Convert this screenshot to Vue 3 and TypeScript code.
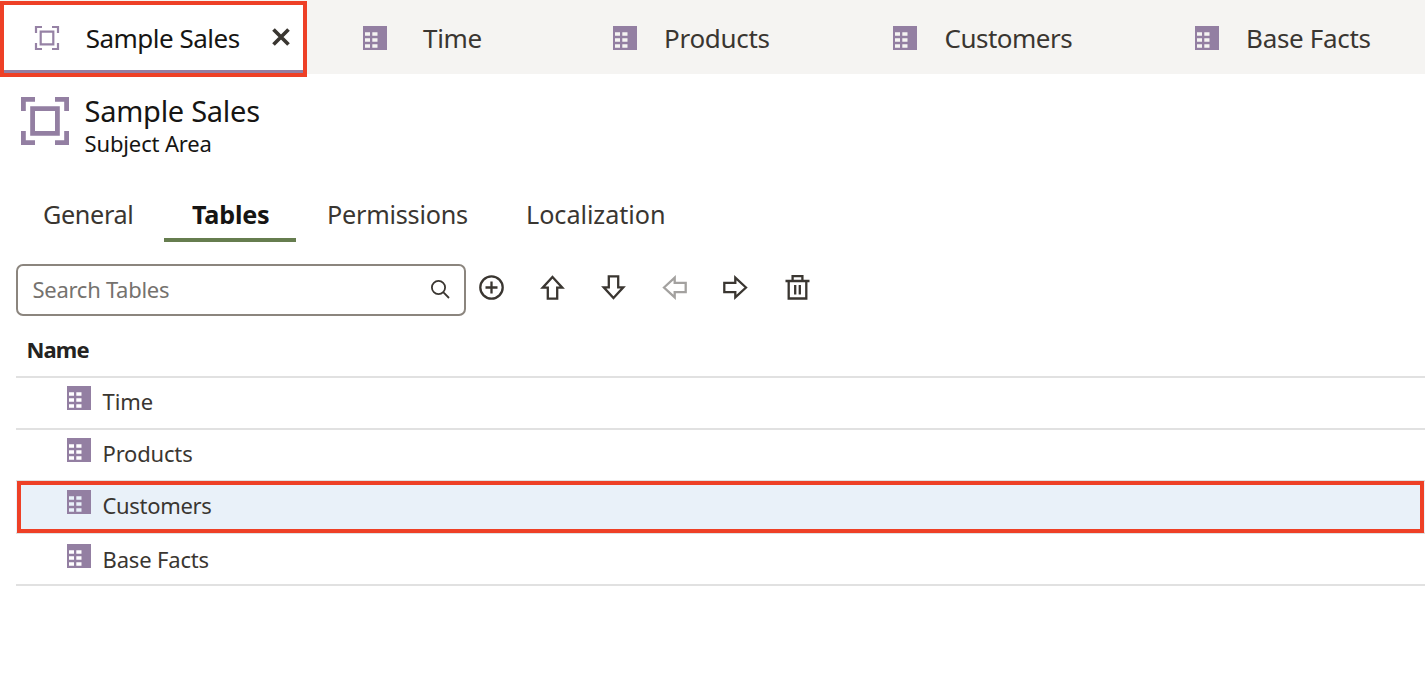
<script setup lang="ts">
interface Label {
  text: string
  spacing: number
}
interface OpenTab extends Label {
  width: number
  gap: number
}
interface Action {
  name: string
  path: string
  disabled?: boolean
}

const openTabs: OpenTab[] = [
  { text: 'Time', spacing: -0.35, width: 250, gap: 36.5 },
  { text: 'Products', spacing: -0.3, width: 280, gap: 27.5 },
  { text: 'Customers', spacing: -0.52, width: 302, gap: 28 },
  { text: 'Base Facts', spacing: -0.32, width: 231, gap: 27.5 },
]

const sections: (Label & { width: number; active?: boolean })[] = [
  { text: 'General', spacing: -0.35, width: 148 },
  { text: 'Tables', spacing: -0.2, width: 132, active: true },
  { text: 'Permissions', spacing: -0.23, width: 203 },
  { text: 'Localization', spacing: -0.05, width: 194 },
]

const actions: Action[] = [
  { name: 'Add', path: 'M12.5 1.3a11.2 11.2 0 1 0 0 22.4a11.2 11.2 0 1 0 0-22.4zM12.5 6.5v12M6.5 12.5h12' },
  { name: 'Move up', path: 'M12.5 2L22.3 12.7H17.2V23.7H7.8V12.7H2.7Z' },
  { name: 'Move down', path: 'M12.5 23L22.3 12.3H17.2V1.3H7.8V12.3H2.7Z' },
  { name: 'Move left', path: 'M2 12.5L12.7 2.7V7.8H23.7V17.2H12.7V22.3Z', disabled: true },
  { name: 'Move right', path: 'M23 12.5L12.3 2.7V7.8H1.3V17.2H12.3V22.3Z' },
  { name: 'Delete', path: 'M.5 6H24.5M3.7 6V23.5H21.3V6M7.6 6V1.2H17.4V6M10.2 10v9.5M14.8 10v9.5' },
]

const tables: (Label & { selected?: boolean })[] = [
  { text: 'Time', spacing: -0.1 },
  { text: 'Products', spacing: -0.18 },
  { text: 'Customers', spacing: -0.33, selected: true },
  { text: 'Base Facts', spacing: -0.17 },
]

const tableIcon =
  'M0 0H24V24H0ZM2 6.2V9.7H7V6.2ZM9.3 6.2V9.7H14.5V6.2ZM2 12.2V15.7H7V12.2ZM9.3 12.2V15.7H14.5V12.2ZM2 18.2V21.7H7V18.2ZM9.3 18.2V21.7H14.5V18.2Z'
</script>

<template>
  <div class="page">
    <header class="strip">
      <div class="current">
        <svg class="area-small" viewBox="0 0 24 24">
          <path d="M1 7V1H7M17 1H23V7M23 17V23H17M7 23H1V17M5.7 5.7H18.3V18.3H5.7Z" />
        </svg>
        <span class="current-name">Sample Sales</span>
        <svg class="close" viewBox="0 0 18 18"><path d="M1.5 1.5L16.5 16.5M16.5 1.5L1.5 16.5" /></svg>
      </div>
      <div v-for="t in openTabs" :key="t.text" class="open-tab" :style="{ width: t.width + 'px', gap: t.gap + 'px' }">
        <svg class="table-icon" viewBox="0 0 24 24"><path :d="tableIcon" fill-rule="evenodd" /></svg>
        <span :style="{ letterSpacing: t.spacing + 'px' }">{{ t.text }}</span>
      </div>
    </header>

    <section class="heading">
      <svg class="area-large" viewBox="0 0 48 48">
        <path d="M2.4 14V2.4H14M34 2.4H45.6V14M45.6 34V45.6H34M14 45.6H2.4V34M11.6 11.6H36.4V36.4H11.6Z" />
      </svg>
      <div>
        <h1>Sample Sales</h1>
        <p>Subject Area</p>
      </div>
    </section>

    <nav class="sections">
      <div v-for="s in sections" :key="s.text" class="section" :class="{ active: s.active }" :style="{ width: s.width + 'px' }">
        <span :style="{ letterSpacing: s.spacing + 'px' }">{{ s.text }}</span>
      </div>
    </nav>

    <div class="toolbar">
      <div class="search">
        <span>Search Tables</span>
        <svg viewBox="0 0 19 19"><circle cx="7.5" cy="7.5" r="6.6" /><path d="M12.2 12.2L18 18" /></svg>
      </div>
      <svg v-for="a in actions" :key="a.name" class="action" :class="{ disabled: a.disabled }" viewBox="0 0 25 25">
        <title>{{ a.name }}</title>
        <path :d="a.path" />
      </svg>
    </div>

    <div class="list">
      <div class="list-head">Name</div>
      <div v-for="t in tables" :key="t.text" class="row" :class="{ selected: t.selected }">
        <svg class="table-icon" viewBox="0 0 24 24"><path :d="tableIcon" fill-rule="evenodd" /></svg>
        <span :style="{ letterSpacing: t.spacing + 'px' }">{{ t.text }}</span>
      </div>
    </div>
  </div>
</template>

<style>
body { background: #fff; overflow: hidden; }
</style>

<style scoped>
.page { box-sizing: border-box; width: 1425px; height: 678px; overflow: hidden; font-family: "Noto Sans", "Open Sans", sans-serif; color: #3a3631; }
.page *, .page *::before { box-sizing: border-box; }
svg { display: block; flex: none; overflow: visible; }
.strip { display: flex; height: 74px; background: #f5f4f2; font-size: 26px; line-height: 76px; }
.current { flex: none; display: flex; width: 307px; height: 76px; margin-top: 1px; border: 4px solid #ee4026; background: linear-gradient(#937fa2, #937fa2) bottom / 100% 3px no-repeat #fff; color: #161513; line-height: 66px; }
.area-small { width: 24px; height: 24px; margin: 20.5px 0 0 30.7px; fill: none; stroke: #9682a5; stroke-width: 2.2; }
.current-name { width: 186.3px; margin-left: 27px; letter-spacing: -0.5px; white-space: nowrap; }
.close { width: 18px; height: 18px; margin: 23px 0 0; fill: none; stroke: #3a3631; stroke-width: 3.7; }
.open-tab { flex: none; display: flex; white-space: nowrap; }
.open-tab:nth-child(2) { margin-left: 55.6px; }
.table-icon { width: 24px; height: 24px; fill: #937fa2; }
.open-tab .table-icon { margin-top: 25.5px; }
.heading { display: flex; height: 110px; padding: 23px 0 0 21px; color: #161513; }
.area-large { width: 48px; height: 48px; margin: .2px 15.6px 0 0; fill: none; stroke: #937fa2; stroke-width: 4.8; }
h1 { margin: -5px 0 0; font-size: 29px; font-weight: 400; line-height: 38px; letter-spacing: -0.27px; }
p { margin: 0; font-size: 22px; line-height: 27px; letter-spacing: -0.15px; }
.sections { display: flex; height: 58px; padding-left: 16px; font-size: 25.2px; line-height: 60px; }
.section { flex: none; height: 58px; padding-left: 27px; white-space: nowrap; }
.section:nth-child(3) { padding-left: 31px; }
.section:nth-child(4) { padding-left: 27px; }
.section.active { border-bottom: 4px solid #667d4f; padding-left: 28px; color: #161513; font-weight: 700; }
.toolbar { display: flex; height: 74px; padding: 22px 0 0 16px; }
.search { display: flex; width: 450px; height: 52px; margin-right: 12.6px; padding-left: 14.5px; border: 2px solid #8b857e; border-radius: 7px; color: #75726e; font-size: 22px; line-height: 47px; }
.search span { width: 398.5px; letter-spacing: -0.28px; }
.search svg { width: 19px; height: 19px; margin-top: 14px; fill: none; stroke: #3a3631; stroke-width: 1.8; }
.action { width: 25px; height: 25px; margin: 11px 36.2px 0 0; fill: none; stroke: #3a3631; stroke-width: 2.3; }
.disabled { stroke: #a3a19f; }
.list { margin-left: 16px; font-size: 22px; }
.list-head { height: 62px; padding-left: 10.5px; border-bottom: 2px solid #e1e1e1; color: #242321; font-weight: 700; line-height: 66px; letter-spacing: -0.85px; }
.row { position: relative; display: flex; height: 52px; padding: 7.5px 0 0 51px; border-bottom: 2px solid #e1e1e1; line-height: 30px; }
.row span { margin-left: 11.5px; }
.row:last-child { padding-top: 9.5px; }
.selected { background: #e9f1f9; }
.selected::before { content: ""; position: absolute; inset: -1px 1px -1px 1px; border: 4px solid #ee4026; }
</style>
